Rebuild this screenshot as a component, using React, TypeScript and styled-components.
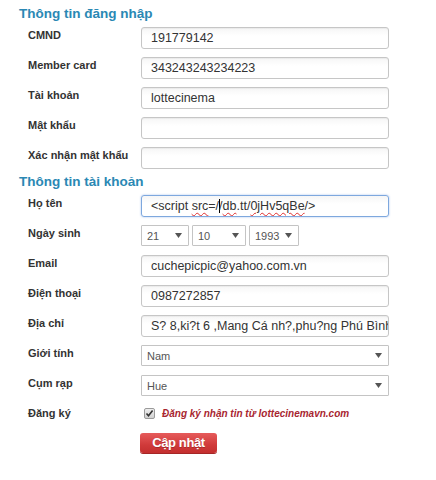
import React from "react";
import styled, { createGlobalStyle } from "styled-components";

const Global = createGlobalStyle`
  html, body { margin: 0; padding: 0; background: #fff; }
  body { font-family: "Liberation Sans", Arial, sans-serif; }
`;

const Page = styled.div`
  width: 436px;
  height: 480px;
  box-sizing: border-box;
  padding: 6px 0 0 19px;
`;

const SectionTitle = styled.h2<{ $top?: number }>`
  margin: ${(p) => p.$top ?? 0}px 0 5px 0;
  font-size: 13.5px;
  line-height: 16px;
  font-weight: bold;
  color: #2a88b4;
`;

const Form = styled.div`
  display: flex;
  flex-direction: column;
  gap: 8px;
  padding-left: 9px;
`;

const Row = styled.div<{ $h?: number }>`
  display: grid;
  grid-template-columns: 113px 248px;
  height: ${(p) => p.$h ?? 22}px;
  align-items: start;
`;

const Label = styled.div`
  font-size: 11px;
  line-height: 13px;
  font-weight: bold;
  color: #333;
  padding-top: 2px;
`;

const TextBox = styled.div<{ $focus?: boolean }>`
  box-sizing: border-box;
  height: 22px;
  border: 1px solid ${(p) => (p.$focus ? "#7ea8de" : "#c6c6c6")};
  border-radius: 3px;
  padding: 0 9px;
  font-size: 12.5px;
  line-height: 20px;
  color: #333;
  white-space: nowrap;
  overflow: hidden;
  background: linear-gradient(#f6f6f6, #ffffff 40%);
  box-shadow: ${(p) =>
    p.$focus ? "0 0 2px rgba(90,140,220,0.6)" : "inset 0 1px 1px rgba(0,0,0,0.05)"};
`;

const Squiggle = styled.span`
  text-decoration: underline wavy #e03030;
  text-decoration-thickness: 1px;
  text-underline-offset: 2px;
`;

const Caret = styled.span`
  display: inline-block;
  width: 0;
  height: 14px;
  border-left: 1px solid #000;
  vertical-align: -3px;
  margin-right: -1px;
`;

const SelectGroup = styled.div`
  display: flex;
  gap: 3px;
`;

const SelectBox = styled.div<{ $w?: number; $h?: number }>`
  box-sizing: border-box;
  width: ${(p) => (p.$w ? `${p.$w}px` : "100%")};
  height: ${(p) => p.$h ?? 21}px;
  border: 1px solid #c4c4c4;
  border-radius: 1px;
  background: #fff;
  display: flex;
  align-items: center;
  justify-content: space-between;
  padding: 0 6px 0 5px;
  font-size: 11px;
  color: #555;
`;

const Arrow = () => (
  <svg width="7" height="5" viewBox="0 0 7 5">
    <path d="M0 0 H7 L3.5 5 Z" fill="#555" />
  </svg>
);

const CheckLine = styled.div`
  display: flex;
  align-items: center;
  gap: 7px;
  padding: 1px 0 0 3px;
  height: 14px;
`;

const CheckText = styled.span`
  font-size: 10px;
  font-weight: bold;
  font-style: italic;
  color: #a82530;
  white-space: nowrap;
`;

const CheckIcon = () => (
  <svg width="11" height="11" viewBox="0 0 11 11">
    <defs>
      <linearGradient id="cbg" x1="0" y1="0" x2="0" y2="1">
        <stop offset="0" stopColor="#f0f0f0" />
        <stop offset="1" stopColor="#cfcfcf" />
      </linearGradient>
    </defs>
    <rect x="0.5" y="0.5" width="10" height="10" rx="1.5" fill="url(#cbg)" stroke="#9a9a9a" />
    <path d="M2.5 5.5 L4.5 7.8 L8.6 2.6" fill="none" stroke="#333" strokeWidth="1.6" />
  </svg>
);

const Button = styled.button`
  box-sizing: border-box;
  width: 77px;
  height: 20px;
  margin-left: -1px;
  padding: 0;
  border: none;
  border-radius: 3px;
  background: linear-gradient(#e65b5b, #d03a3a 60%, #c42f2f);
  box-shadow: 0 1px 0 #a52626;
  color: #fff;
  font-family: "Liberation Sans", Arial, sans-serif;
  font-size: 13px;
  font-weight: bold;
  letter-spacing: -0.4px;
  line-height: 20px;
  text-shadow: 0 1px 0 rgba(0, 0, 0, 0.2);
`;

const Field = ({ label, children, h }: { label: string; children?: React.ReactNode; h?: number }) => (
  <Row $h={h}>
    <Label>{label}</Label>
    <div>{children}</div>
  </Row>
);

export default function App() {
  return (
    <Page>
      <Global />
      <SectionTitle>Thông tin đăng nhập</SectionTitle>
      <Form>
        <Field label="CMND">
          <TextBox>191779142</TextBox>
        </Field>
        <Field label="Member card">
          <TextBox>343243243234223</TextBox>
        </Field>
        <Field label="Tài khoản">
          <TextBox>lottecinema</TextBox>
        </Field>
        <Field label="Mật khẩu">
          <TextBox />
        </Field>
        <Field label="Xác nhận mật khẩu">
          <TextBox />
        </Field>
      </Form>

      <SectionTitle $top={5}>Thông tin tài khoản</SectionTitle>
      <Form>
        <Field label="Họ tên">
          <TextBox $focus>
            {"<script "}
            <Squiggle>src</Squiggle>
            {"=/"}
            <Caret />
            {"/"}
            <Squiggle>db</Squiggle>
            {".tt/"}
            <Squiggle>0jHv5qBe</Squiggle>
            {"/>"}
          </TextBox>
        </Field>
        <Field label="Ngày sinh">
          <SelectGroup>
            <SelectBox $w={48} $h={21}>
              <span>21</span>
              <Arrow />
            </SelectBox>
            <SelectBox $w={54} $h={21}>
              <span>10</span>
              <Arrow />
            </SelectBox>
            <SelectBox $w={50} $h={21}>
              <span>1993</span>
              <Arrow />
            </SelectBox>
          </SelectGroup>
        </Field>
        <Field label="Email">
          <TextBox>cuchepicpic@yahoo.com.vn</TextBox>
        </Field>
        <Field label="Điện thoại">
          <TextBox>0987272857</TextBox>
        </Field>
        <Field label="Địa chỉ">
          <TextBox>S? 8,ki?t 6 ,Mang Cá nh?,phu?ng Phú Bình</TextBox>
        </Field>
        <Field label="Giới tính">
          <SelectBox>
            <span>Nam</span>
            <Arrow />
          </SelectBox>
        </Field>
        <Field label="Cụm rạp">
          <SelectBox>
            <span>Hue</span>
            <Arrow />
          </SelectBox>
        </Field>
        <Field label="Đăng ký" h={20}>
          <CheckLine>
            <CheckIcon />
            <CheckText>Đăng ký nhận tin từ lottecinemavn.com</CheckText>
          </CheckLine>
        </Field>
        <Row>
          <span />
          <div>
            <Button>Cập nhật</Button>
          </div>
        </Row>
      </Form>
    </Page>
  );
}
